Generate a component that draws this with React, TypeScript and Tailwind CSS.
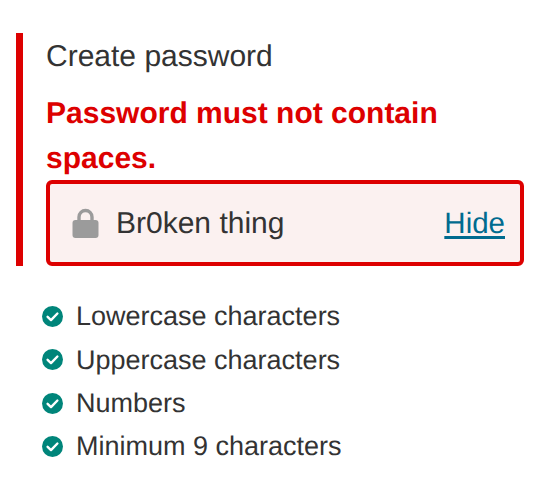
const rules = ["Lowercase characters", "Uppercase characters", "Numbers", "Minimum 9 characters"];

function CheckIcon() {
  return (
    <svg width="21" height="21" viewBox="0 0 21 21" className="shrink-0">
      <circle cx="10.5" cy="10.5" r="10.5" fill="#00857a" />
      <path d="M5.6 10.8l3.4 3.3 6.4-6.6" fill="none" stroke="#fff" strokeWidth="2.4" strokeLinecap="round" strokeLinejoin="round" />
    </svg>
  );
}

function LockIcon() {
  return (
    <svg width="27" height="31" viewBox="0 0 27 31" className="shrink-0">
      <path d="M7 14V9a6.5 6.5 0 0 1 13 0v5" fill="none" stroke="#9b9b9b" strokeWidth="3.4" />
      <rect x="0.5" y="12" width="26" height="18" rx="3" fill="#9b9b9b" />
    </svg>
  );
}

export default function App() {
  return (
    <div className="w-[542px] h-[483px] bg-white font-['Liberation_Sans',Arial,sans-serif] text-[#333333] pt-[33px] [text-rendering:geometricPrecision]">
      <div className="ml-[16px] w-[508px] border-l-[7px] border-[#dd0000] pl-[23px]">
        <p className="text-[30px] leading-[46px] pt-[1px]">Create password</p>
        <p className="text-[30px] leading-[45px] mt-[11px] font-bold text-[#dd0000]">Password must not contain spaces.</p>
        <div className="flex items-center h-[86px] -mt-[1px] rounded-[6px] border-4 border-[#dd0000] bg-[#fbf1f0] pl-[22px] pr-[15px]">
          <LockIcon />
          <span className="ml-[17px] text-[30px]">Br0ken thing</span>
          <a href="#" className="ml-auto pt-[3px] text-[29.5px] text-[#006b8f] underline decoration-[3px] underline-offset-[3px]">Hide</a>
        </div>
      </div>
      <ul className="mt-[34px] ml-[42px] flex flex-col gap-[10px]">
        {rules.map((r) => (
          <li key={r} className="flex items-center gap-[13px] h-[33.33px] text-[27px]">
            <CheckIcon />
            {r}
          </li>
        ))}
      </ul>
    </div>
  );
}
